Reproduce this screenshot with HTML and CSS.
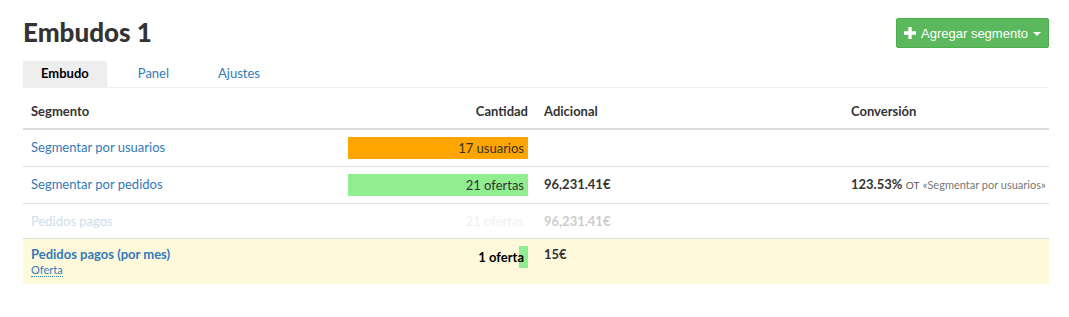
FILE: index.html
```html
<!DOCTYPE html>
<html lang="es">
<head>
    <meta charset="UTF-8">
    <meta name="viewport" content="width=device-width, initial-scale=1.0">
    <title>Embudos 1</title>
    <link rel="stylesheet" href="styles.css">
</head>
<body>
    <div class="page">
        <div class="page-header">
            <h1>Embudos 1</h1>
            <button class="btn-add" type="button">
                <svg class="plus" width="12" height="12" viewBox="0 0 12 12"><path d="M4.3 0h3.4v4.3H12v3.4H7.7V12H4.3V7.7H0V4.3h4.3z" fill="#fff"/></svg>
                Agregar segmento
                <span class="caret"></span>
            </button>
        </div>

        <ul class="tabs">
            <li class="active"><a href="#">Embudo</a></li>
            <li><a href="#">Panel</a></li>
            <li><a href="#">Ajustes</a></li>
        </ul>

        <table class="funnel">
            <colgroup>
                <col class="col-seg">
                <col class="col-qty">
                <col class="col-add">
                <col class="col-conv">
            </colgroup>
            <thead>
                <tr>
                    <th>Segmento</th>
                    <th class="right">Cantidad</th>
                    <th>Adicional</th>
                    <th>Conversión</th>
                </tr>
            </thead>
            <tbody>
                <tr>
                    <td><a href="#">Segmentar por usuarios</a></td>
                    <td><div class="qty orange" style="background-size: 100% 100%;">17 usuarios</div></td>
                    <td></td>
                    <td></td>
                </tr>
                <tr>
                    <td><a href="#">Segmentar por pedidos</a></td>
                    <td><div class="qty green" style="background-size: 100% 100%;">21 ofertas</div></td>
                    <td class="strong">96,231.41€</td>
                    <td class="conv"><span class="strong">123.53%</span> <span class="of">OT</span> <span class="ref">«Segmentar por usuarios»</span></td>
                </tr>
                <tr class="muted">
                    <td><a href="#">Pedidos pagos</a></td>
                    <td><div class="qty">21 ofertas</div></td>
                    <td class="strong">96,231.41€</td>
                    <td></td>
                </tr>
                <tr class="current">
                    <td>
                        <a href="#" class="strong-link">Pedidos pagos (por mes)</a>
                        <div class="kind-line"><abbr class="kind">Oferta</abbr></div>
                    </td>
                    <td><div class="qty green bold" style="background-size: 5% 100%;">1 oferta</div></td>
                    <td class="strong">15€</td>
                    <td></td>
                </tr>
            </tbody>
        </table>
    </div>
</body>
</html>
```

FILE: styles.css
```css
body {
    margin: 0;
    font-family: Lato, "Noto Sans", sans-serif;
    font-size: 13px;
    color: #333;
    background: #fff;
}
a {
    color: #337ab7;
    text-decoration: none;
}
.page {
    padding: 0 20px 0 23px;
}
.page-header {
    display: flex;
    justify-content: space-between;
    align-items: flex-start;
}
.page-header h1 {
    margin: 15px 0 0;
    font-size: 26px;
    line-height: 34px;
    font-weight: 900;
    color: #333;
}
.btn-add {
    margin-top: 18px;
    height: 30px;
    width: 153px;
    display: flex;
    align-items: center;
    justify-content: center;
    gap: 4px;
    padding: 0;
    font-family: "Liberation Sans", Arial, sans-serif;
    font-size: 13px;
    color: #fff;
    background: #5cb85c;
    border: 1px solid #4cae4c;
    border-radius: 2px;
}
.btn-add .plus {
    margin-right: 1px;
}
.caret {
    width: 0;
    height: 0;
    margin-left: 1px;
    margin-top: 2px;
    border-top: 4px solid #fff;
    border-left: 4px solid transparent;
    border-right: 4px solid transparent;
}
.tabs {
    list-style: none;
    margin: 12px 0 0;
    padding: 0;
    display: flex;
    gap: 13px;
    border-bottom: 1px solid #eee;
}
.tabs li a {
    display: block;
    padding: 0 18px 2px;
    line-height: 24px;
}
.tabs li.active a {
    background: #eee;
    color: #000;
    font-weight: bold;
}
.funnel {
    width: 100%;
    border-collapse: collapse;
    table-layout: fixed;
}
.col-seg { width: 317px; }
.col-qty { width: 196px; }
.col-add { width: 307px; }
.col-conv { width: 206px; }
.funnel th {
    text-align: left;
    font-weight: bold;
    padding: 15px 8px 9px;
    line-height: 16px;
    border-bottom: 2px solid #ddd;
}
.funnel th.right {
    text-align: right;
}
.funnel td {
    padding: 7px 8px;
    line-height: 20px;
    vertical-align: top;
    border-bottom: 1px solid #ddd;
}
.funnel td.conv {
    white-space: nowrap;
}
.funnel tr.current td {
    border-bottom: none;
    background: #fff9db;
    line-height: 16px;
}
.qty {
    line-height: 22px;
    text-align: right;
    padding-right: 4px;
    background-repeat: no-repeat;
    background-position: right top;
    background-size: 0 0;
}
.funnel tr.current .qty {
    line-height: 22px;
}
.qty.orange {
    background-image: linear-gradient(#ffa500, #ffa500);
}
.qty.green {
    background-image: linear-gradient(#90ee90, #90ee90);
}
.qty.bold {
    font-weight: bold;
    color: #000;
}
.strong {
    font-weight: bold;
}
.of {
    font-size: 10px;
    color: #555;
}
.ref {
    font-size: 11px;
    color: #777;
}
.muted a {
    color: #cddeed;
}
.muted .qty {
    line-height: 20px;
    color: #f0f0f0;
}
.muted .strong {
    color: #ccc;
}
.strong-link {
    font-weight: bold;
}
.kind-line {
    line-height: 14px;
}
.kind {
    font-size: 11px;
    color: #337ab7;
    text-decoration: none;
    border-bottom: 1px dotted #337ab7;
}
```
